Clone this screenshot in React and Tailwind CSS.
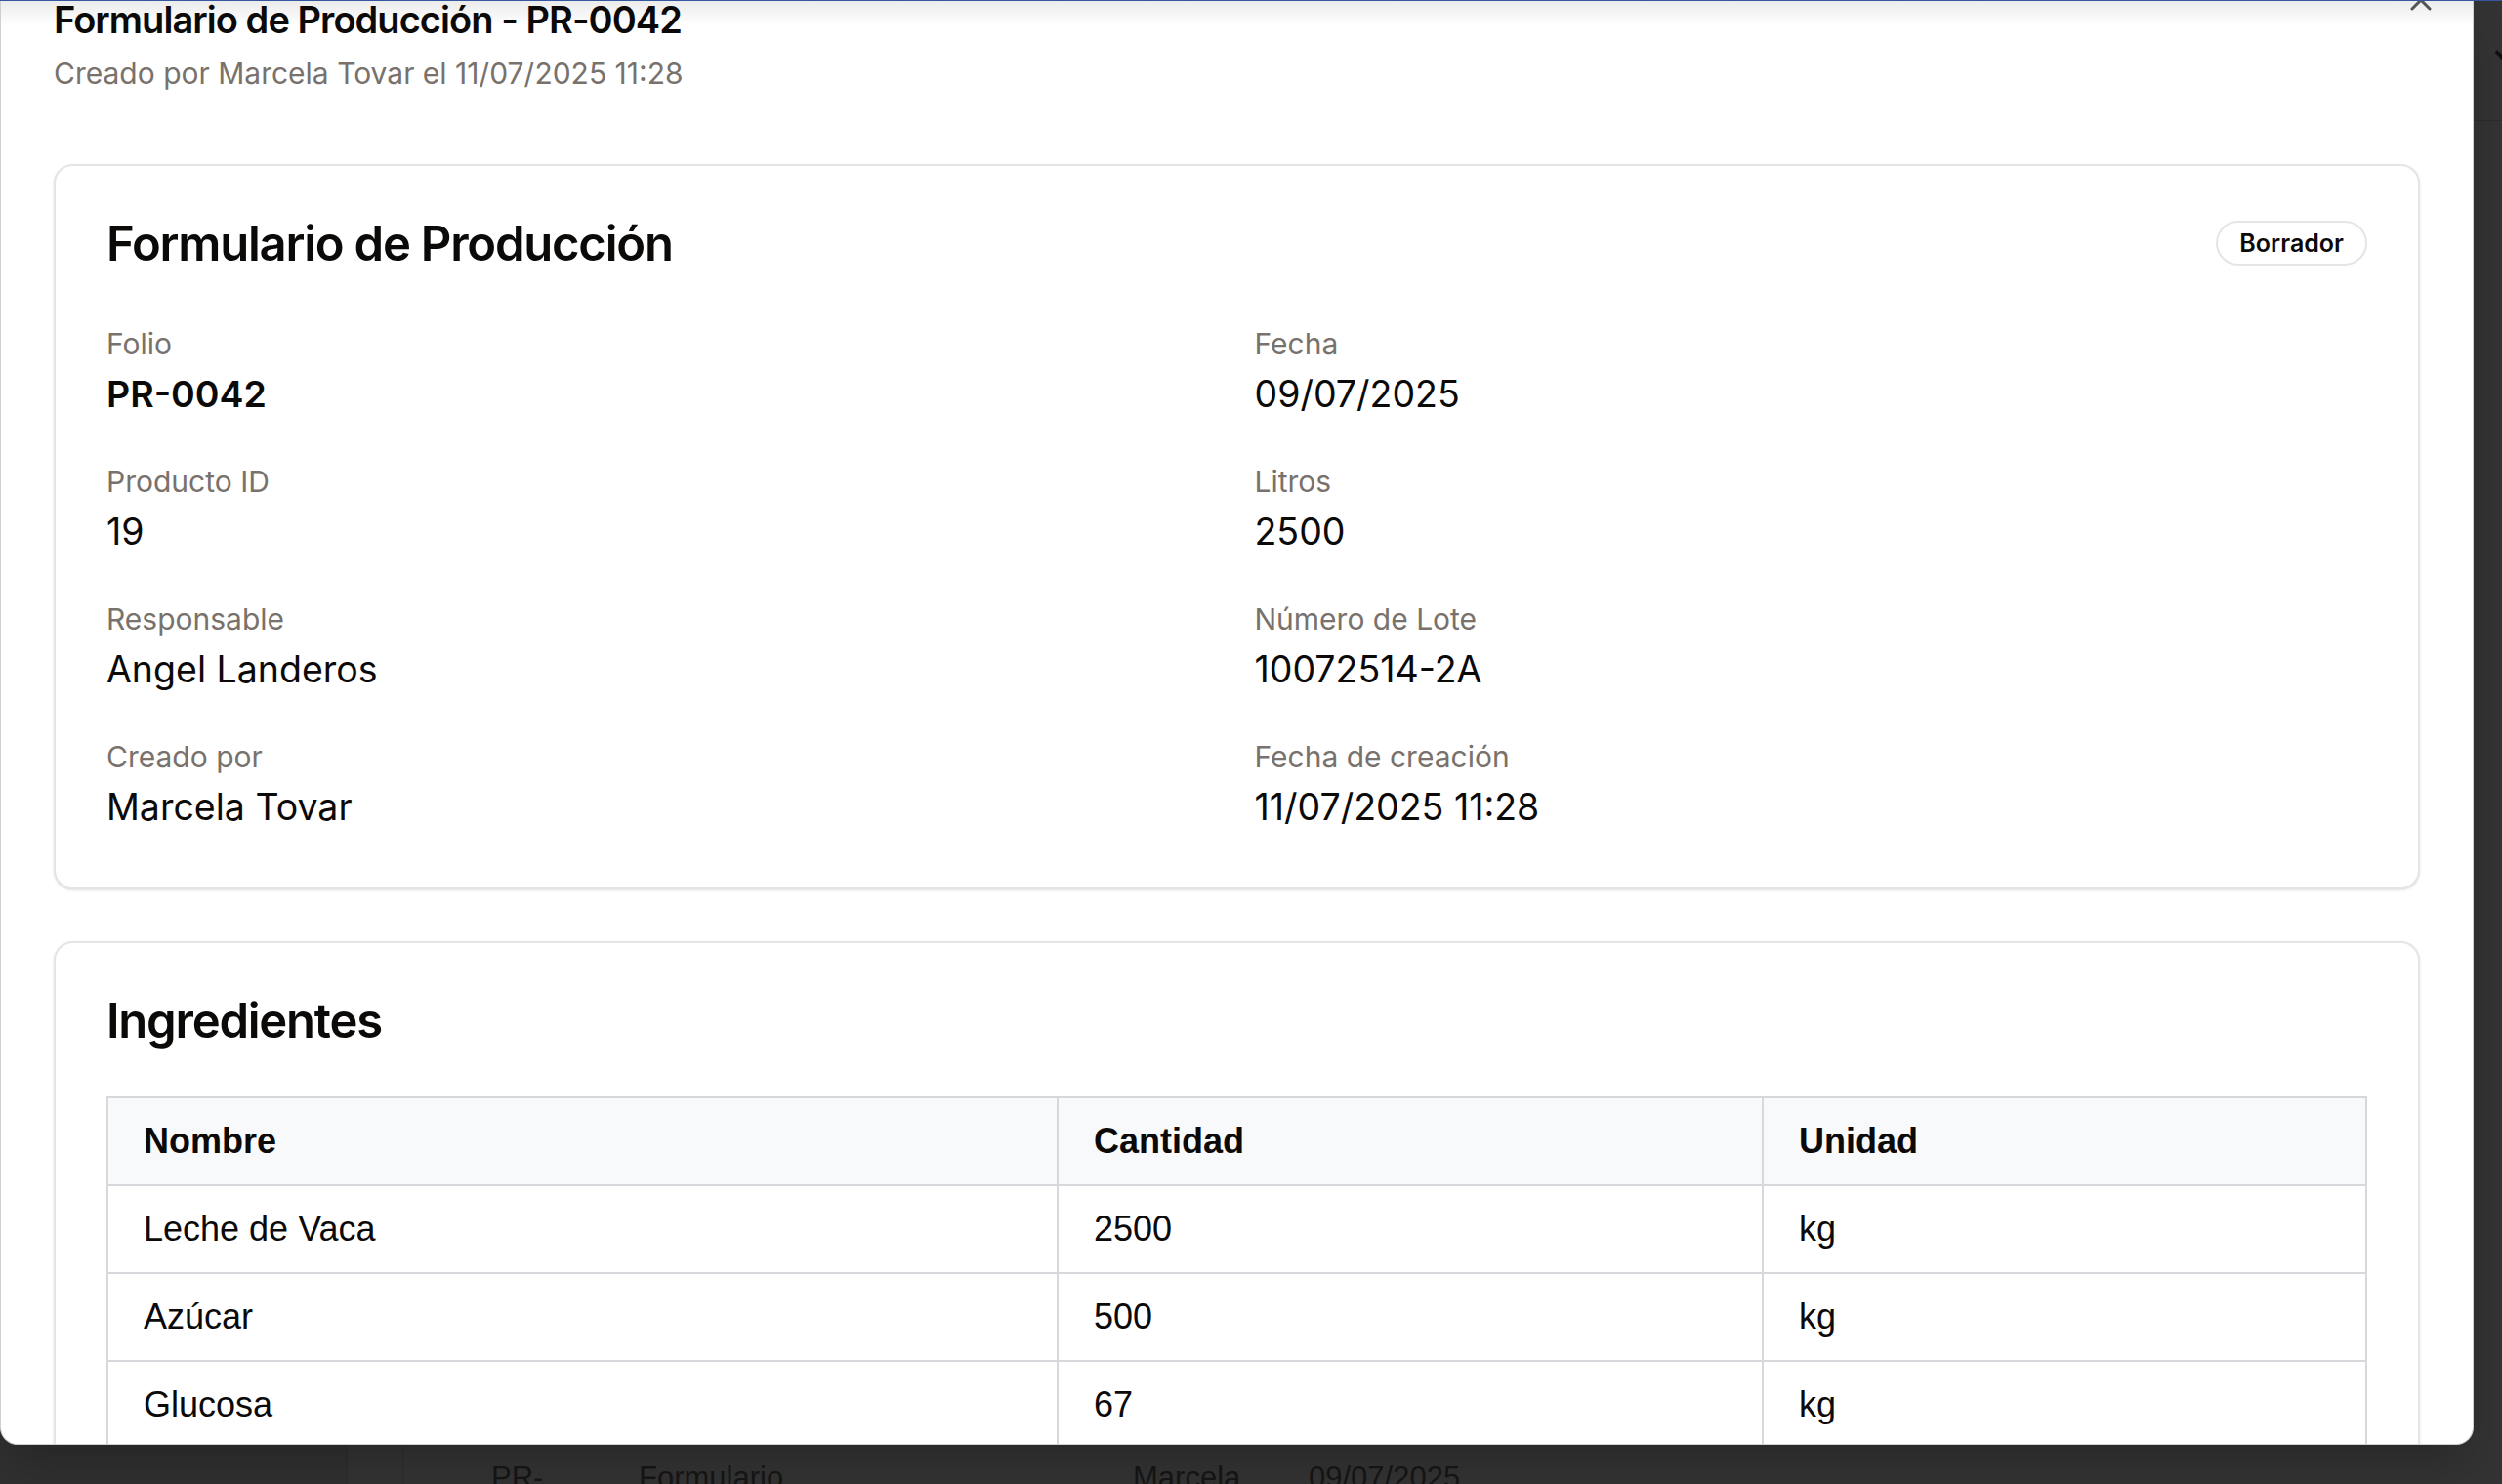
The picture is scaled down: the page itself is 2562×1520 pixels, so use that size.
import React from 'react';
import { X, ChevronDown } from 'lucide-react';

const campos = [
  { label: 'Folio', value: 'PR-0042', strong: true },
  { label: 'Fecha', value: '09/07/2025' },
  { label: 'Producto ID', value: '19' },
  { label: 'Litros', value: '2500' },
  { label: 'Responsable', value: 'Angel Landeros' },
  { label: 'Número de Lote', value: '10072514-2A' },
  { label: 'Creado por', value: 'Marcela Tovar' },
  { label: 'Fecha de creación', value: '11/07/2025 11:28' },
];

const ingredientes = [
  { nombre: 'Leche de Vaca', cantidad: '2500', unidad: 'kg' },
  { nombre: 'Azúcar', cantidad: '500', unidad: 'kg' },
  { nombre: 'Glucosa', cantidad: '67', unidad: 'kg' },
  { nombre: 'Crema', cantidad: '120', unidad: 'kg' },
];

const Card = ({ children, className = '' }) => (
  <div className={`rounded-[20px] border-2 border-[#e7e5e4] bg-white px-[52px] pt-[52px] shadow-sm ${className}`}>
    {children}
  </div>
);

// fondo de la página, oscurecido por el overlay del diálogo
const PaginaFondo = () => (
  <div className="flex h-full w-full flex-col bg-[#333333]">
    <div className="flex h-[124px] shrink-0 items-start justify-end border-b border-[#2b2b2b]">
      <ChevronDown className="mr-[-22px] mt-[40px] text-[#111]" size={36} strokeWidth={2.5} />
    </div>
    <div className="flex flex-1">
      <div className="w-[356px] shrink-0 border-r border-[#2b2b2b] bg-[#303030]" />
      <div className="w-[57px] shrink-0 border-r border-[#2e2e2e]" />
      <div className="flex flex-1 flex-col justify-end">
        <div className="flex h-[22px] items-start gap-[40px] overflow-hidden pl-[90px] font-['Liberation_Sans',sans-serif] text-[31px] leading-[40px] text-[#161616]">
          <span className="mt-[-4px] w-[111px] shrink-0">PR-0041</span>
          <span className="mt-[-4px] w-[466px] shrink-0">Formulario</span>
          <span className="mt-[-4px] w-[140px] shrink-0">Marcela</span>
          <span className="mt-[-4px] shrink-0">09/07/2025</span>
        </div>
      </div>
    </div>
  </div>
);

export default function App() {
  return (
    <div className="relative h-[1520px] w-[2562px] overflow-hidden bg-[#333333] font-['Inter','Noto_Sans',sans-serif] text-[#0c0a09]">
      <PaginaFondo />

      {/* diálogo, desplazado hacia abajo */}
      <div className="absolute left-0 top-0 h-[1480px] w-[2533px] overflow-hidden rounded-b-[18px] border-x border-b border-[#cfcfcf] bg-white shadow-2xl">
        <div className="flex flex-col px-[54px] pt-px">
          <h2 className="text-[38px] font-semibold leading-none tracking-tight">
            Formulario de Producción - PR-0042
          </h2>
          <p className="mt-[14px] text-[30px] leading-[44px] text-[#78716c]">
            Creado por Marcela Tovar el 11/07/2025 11:28
          </p>

          <Card className="mt-[71px] pb-[52px]">
            <div className="flex h-[54px] items-center justify-between">
              <h3 className="text-[49px] font-semibold leading-none tracking-tight">Formulario de Producción</h3>
              <span className="rounded-full border-2 border-[#e7e5e4] px-[22px] text-[25px] font-semibold leading-[42px]">
                Borrador
              </span>
            </div>
            <div className="mt-[54px] grid grid-cols-2 gap-x-[36px] gap-y-[37px]">
              {campos.map((c) => (
                <div key={c.label} className="flex flex-col">
                  <span className="text-[30px] leading-[44px] text-[#78716c]">{c.label}</span>
                  <span className={`text-[37.5px] leading-[60px] ${c.strong ? 'font-semibold' : ''}`}>{c.value}</span>
                </div>
              ))}
            </div>
          </Card>

          <Card className="mt-[53px] pb-[52px]">
            <div className="flex h-[54px] items-center">
              <h3 className="text-[49px] font-semibold leading-none tracking-tight">Ingredientes</h3>
            </div>
            <table className="mt-[51px] w-full table-fixed border-collapse border-2 border-[#d6d8dc] text-left font-['Liberation_Sans',Arial,sans-serif] text-[36px]">
              <colgroup>
                <col className="w-[973px]" />
                <col className="w-[722px]" />
                <col />
              </colgroup>
              <thead>
                <tr className="bg-[#f8f9fa]">
                  <th className="h-[90px] border-2 border-[#d6d8dc] px-[36px] font-bold">Nombre</th>
                  <th className="h-[90px] border-2 border-[#d6d8dc] px-[36px] font-bold">Cantidad</th>
                  <th className="h-[90px] border-2 border-[#d6d8dc] px-[36px] font-bold">Unidad</th>
                </tr>
              </thead>
              <tbody>
                {ingredientes.map((i) => (
                  <tr key={i.nombre}>
                    <td className="h-[90px] border-2 border-[#d6d8dc] px-[36px]">{i.nombre}</td>
                    <td className="h-[90px] border-2 border-[#d6d8dc] px-[36px]">{i.cantidad}</td>
                    <td className="h-[90px] border-2 border-[#d6d8dc] px-[36px]">{i.unidad}</td>
                  </tr>
                ))}
              </tbody>
            </table>
          </Card>
        </div>

        {/* sombra de desplazamiento */}
        <div className="pointer-events-none absolute inset-x-0 top-0 h-[26px] bg-linear-to-b from-black/[0.08] to-transparent" />
        <button className="absolute left-[2460px] top-[-18px] text-[#555]">
          <X size={36} strokeWidth={2} />
        </button>
      </div>

      <div className="absolute inset-x-0 top-0 h-px bg-[#3556a0]" />
    </div>
  );
}
